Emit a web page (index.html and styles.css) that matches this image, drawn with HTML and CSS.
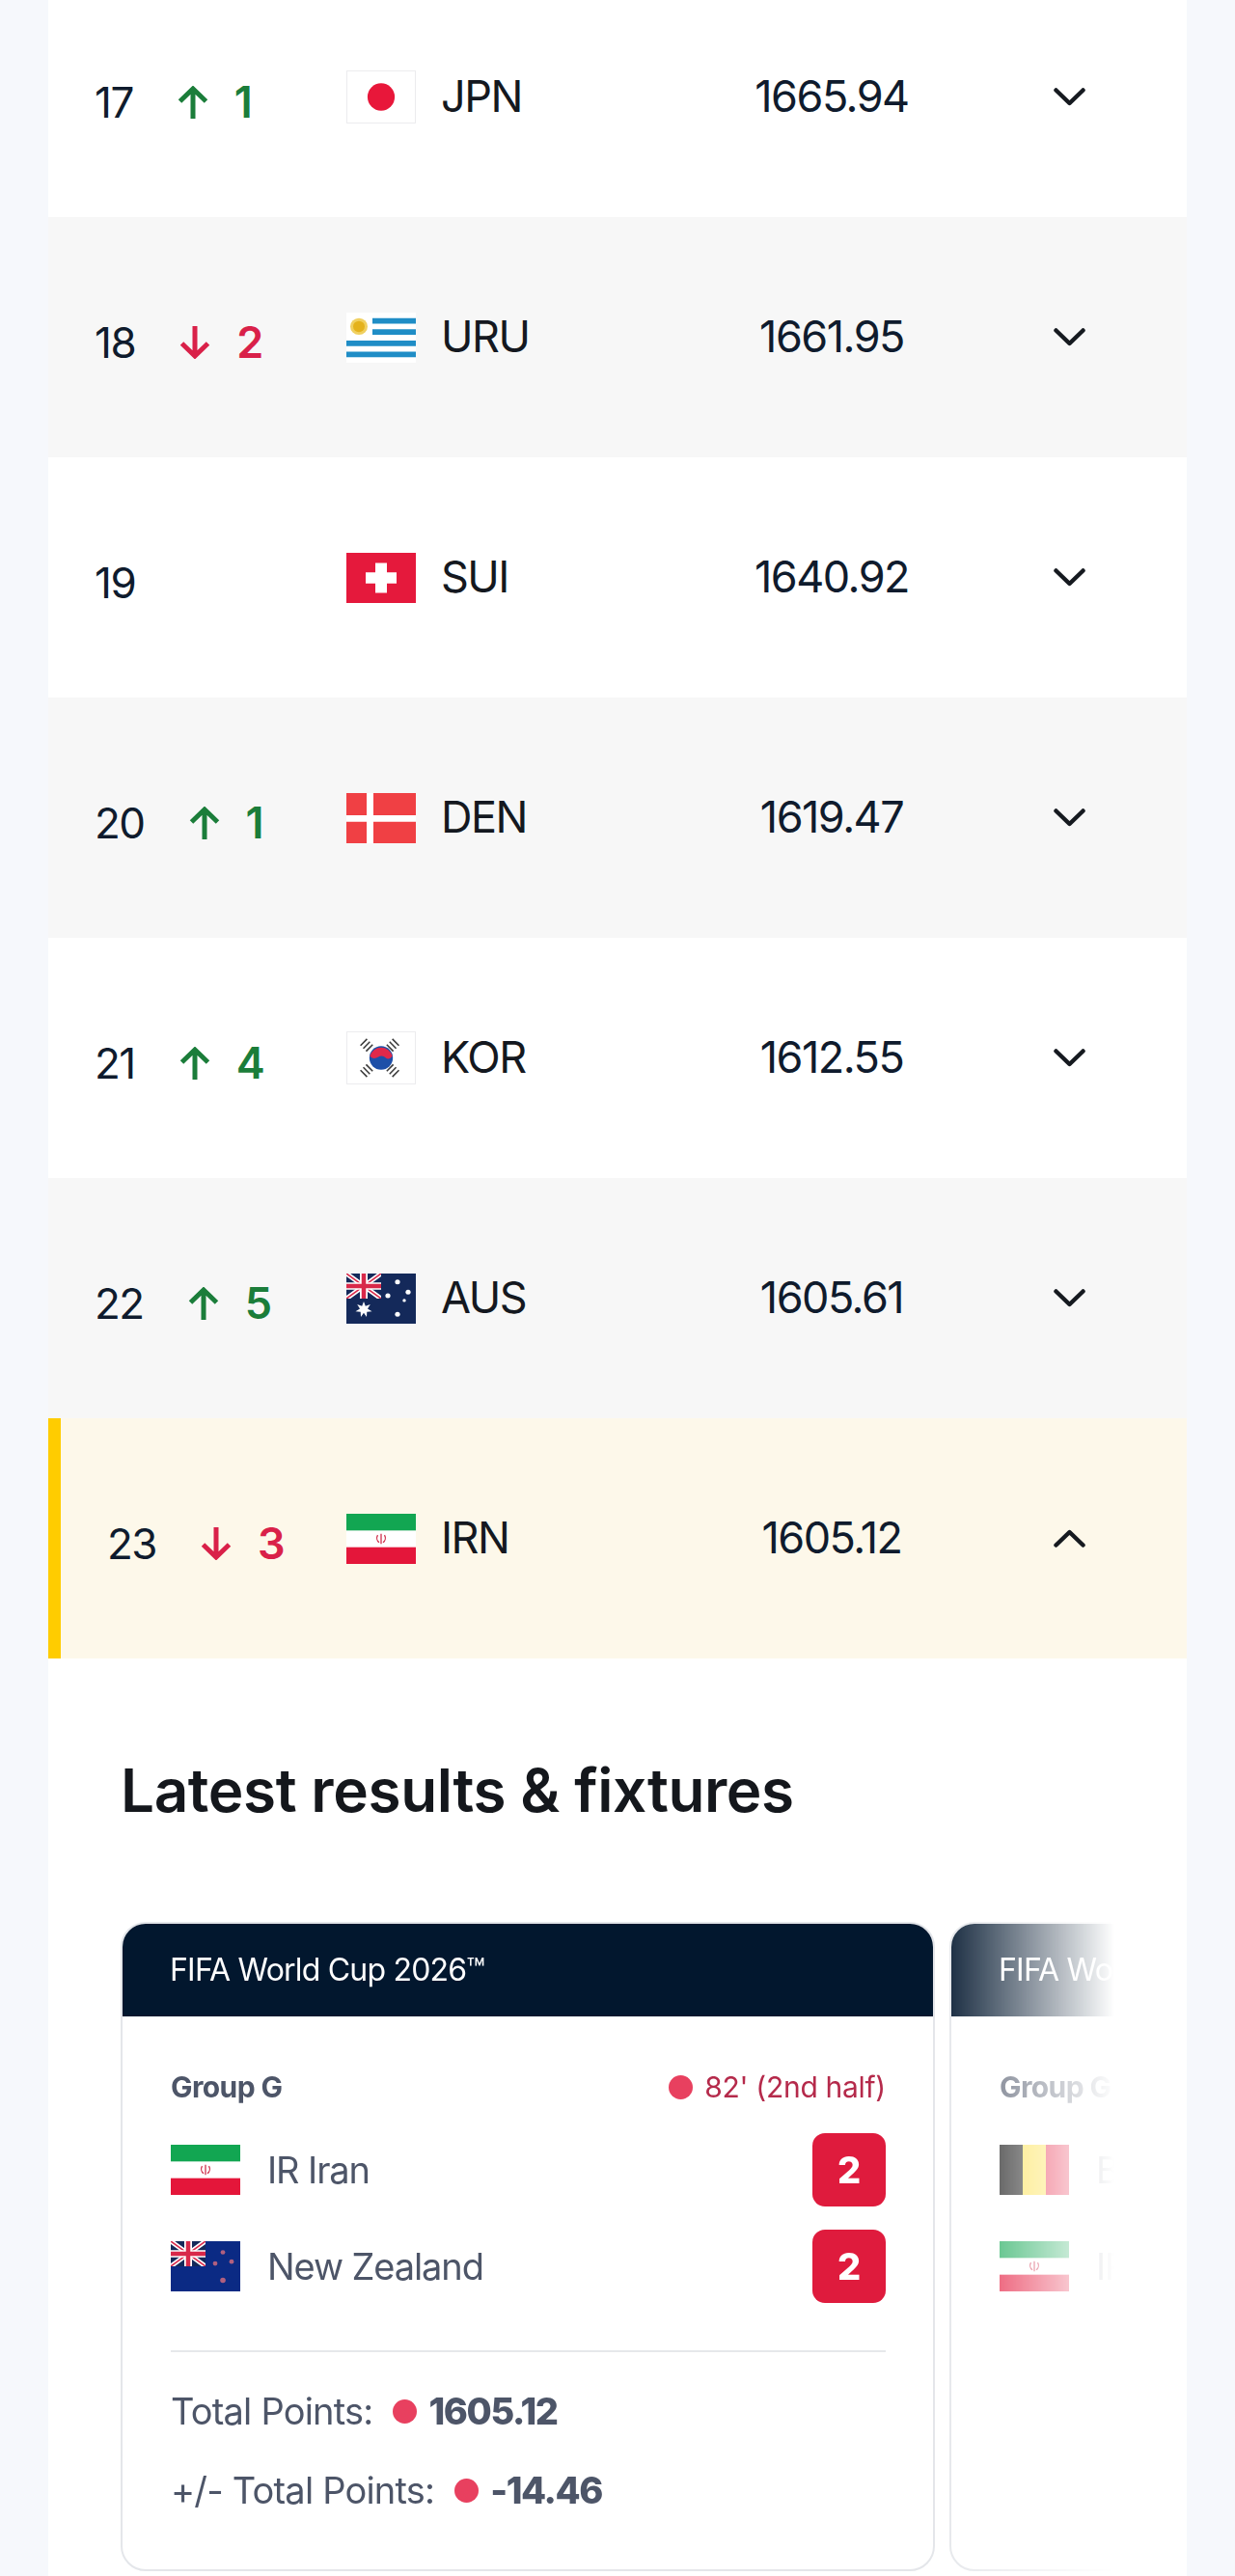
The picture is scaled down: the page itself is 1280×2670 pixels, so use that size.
FILE: index.html
```html
<!DOCTYPE html>
<html lang="en">
<head>
<meta charset="utf-8">
<title>FIFA Ranking</title>
<link rel="stylesheet" href="styles.css">
</head>
<body>
<svg class="defs" width="0" height="0" aria-hidden="true">
  <defs>
    <symbol id="up" viewBox="0 0 32 34"><path d="M16 34V3M2.500 16 16 3l13.500 13" fill="none" stroke="currentColor" stroke-width="5"/></symbol>
    <symbol id="down" viewBox="0 0 32 34"><path d="M16 0v31M2.500 18 16 31l13.500-13" fill="none" stroke="currentColor" stroke-width="5"/></symbol>
    <symbol id="chev-d" viewBox="0 0 33 19"><path d="M2.500 2.500 16.500 16 30.500 2.500" fill="none" stroke="#161a20" stroke-width="4.500" stroke-linecap="round" stroke-linejoin="round"/></symbol>
    <symbol id="chev-u" viewBox="0 0 33 19"><path d="M2.500 16.500 16.500 3 30.500 16.500" fill="none" stroke="#161a20" stroke-width="4.500" stroke-linecap="round" stroke-linejoin="round"/></symbol>
    <symbol id="irn" viewBox="0 0 72 54" preserveAspectRatio="none">
      <rect width="72" height="54" fill="#fff"/><rect width="72" height="18" fill="#12a652"/><rect y="36" width="72" height="18" fill="#e4163a"/>
      <path d="M36 21.500v11M32.500 23c-1.500 2.500-1 6 1.500 8M39.500 23c1.500 2.500 1 6-1.500 8" fill="none" stroke="#d0304c" stroke-width="1.300"/>
    </symbol>
    <symbol id="jack" viewBox="0 0 36 27">
      <rect width="36" height="27" fill="#14295a"/>
      <path d="M0 0 36 27M36 0 0 27" stroke="#fff" stroke-width="5"/>
      <path d="M0 0 36 27M36 0 0 27" stroke="#d8294a" stroke-width="1.600"/>
      <path d="M18 0v27M0 13.500h36" stroke="#fff" stroke-width="8"/>
      <path d="M18 0v27M0 13.500h36" stroke="#d8294a" stroke-width="4.500"/>
    </symbol>
  </defs>
</svg>
<main class="table">
  <div class="row">
    <div class="rank-cell"><span class="rank">17</span><span class="move up"><svg class="arrow"><use href="#up"/></svg><b>1</b></span></div>
    <div class="team"><svg class="flag flag-light" viewBox="0 0 72 54" preserveAspectRatio="none"><rect width="72" height="54" fill="#fff"/><circle cx="36" cy="27" r="14.500" fill="#e8173a"/></svg><span>JPN</span></div>
    <div class="points">1665.94</div>
    <div class="toggle"><svg class="chev"><use href="#chev-d"/></svg></div>
  </div>
  <div class="row alt">
    <div class="rank-cell"><span class="rank">18</span><span class="move down"><svg class="arrow"><use href="#down"/></svg><b>2</b></span></div>
    <div class="team"><svg class="flag" viewBox="0 0 72 54" preserveAspectRatio="none"><rect width="72" height="54" fill="#fff"/><path d="M27 9h45M27 21h45M0 33h72M0 45h72" stroke="#1f8dc6" stroke-width="6"/><circle cx="13" cy="15" r="9" fill="#f0d060"/><circle cx="13" cy="15" r="6" fill="#e4b21c"/></svg><span>URU</span></div>
    <div class="points">1661.95</div>
    <div class="toggle"><svg class="chev"><use href="#chev-d"/></svg></div>
  </div>
  <div class="row">
    <div class="rank-cell"><span class="rank">19</span></div>
    <div class="team"><svg class="flag" viewBox="0 0 72 54" preserveAspectRatio="none"><rect width="72" height="54" fill="#e5193c"/><path d="M30 11h12v10h10v12H42v10H30V33H20V21h10z" fill="#fff"/></svg><span>SUI</span></div>
    <div class="points">1640.92</div>
    <div class="toggle"><svg class="chev"><use href="#chev-d"/></svg></div>
  </div>
  <div class="row alt">
    <div class="rank-cell"><span class="rank">20</span><span class="move up"><svg class="arrow"><use href="#up"/></svg><b>1</b></span></div>
    <div class="team"><svg class="flag" viewBox="0 0 72 54" preserveAspectRatio="none"><rect width="72" height="54" fill="#f04044"/><path d="M24.500 0v54M0 27.500h72" stroke="#fff" stroke-width="7"/></svg><span>DEN</span></div>
    <div class="points">1619.47</div>
    <div class="toggle"><svg class="chev"><use href="#chev-d"/></svg></div>
  </div>
  <div class="row">
    <div class="rank-cell"><span class="rank">21</span><span class="move up"><svg class="arrow"><use href="#up"/></svg><b>4</b></span></div>
    <div class="team"><svg class="flag flag-light" viewBox="0 0 72 54" preserveAspectRatio="none"><rect width="72" height="54" fill="#fff"/><circle cx="36" cy="27" r="12.500" fill="#1d4fa8"/><path d="M24 25a12.500 12.500 0 0 1 24 0c-2 3-5 4-7 2s-5-3-8-1-7 2-9-1z" fill="#e0294a"/><g stroke="#3a3a3a" stroke-width="1.600" fill="none"><path d="M14 14l7-7M17 17l7-7M20 20l7-7"/><path d="M45 10l7 7M48 7l7 7M42 13l7 7"/><path d="M14 40l7 7M17 37l7 7M20 34l7 7"/><path d="M45 44l7-7M48 47l7-7M42 41l7-7"/></g></svg><span>KOR</span></div>
    <div class="points">1612.55</div>
    <div class="toggle"><svg class="chev"><use href="#chev-d"/></svg></div>
  </div>
  <div class="row alt">
    <div class="rank-cell"><span class="rank">22</span><span class="move up"><svg class="arrow"><use href="#up"/></svg><b>5</b></span></div>
    <div class="team"><svg class="flag" viewBox="0 0 72 54" preserveAspectRatio="none"><rect width="72" height="54" fill="#14295a"/><use href="#jack" width="36" height="27"/><g fill="#fff"><circle cx="53" cy="9" r="2.600"/><circle cx="64" cy="20" r="2.600"/><circle cx="43" cy="24" r="2.600"/><circle cx="60" cy="29" r="1.700"/><circle cx="53" cy="44" r="2.600"/><path d="M18 30l1.800 5 5-1.800-2.800 4.800 4.500 2.800-5.200.6-.3 5.300-3-4.400-3 4.400-.3-5.300-5.200-.6 4.500-2.800-2.800-4.800 5 1.800z"/></g></svg><span>AUS</span></div>
    <div class="points">1605.61</div>
    <div class="toggle"><svg class="chev"><use href="#chev-d"/></svg></div>
  </div>
  <div class="row current">
    <div class="rank-cell"><span class="rank">23</span><span class="move down"><svg class="arrow"><use href="#down"/></svg><b>3</b></span></div>
    <div class="team"><svg class="flag"><use href="#irn"/></svg><span>IRN</span></div>
    <div class="points">1605.12</div>
    <div class="toggle"><svg class="chev"><use href="#chev-u"/></svg></div>
  </div>
  <section class="panel">
    <h2 class="panel-title">Latest results &amp; fixtures</h2>
    <div class="cards">
      <article class="card">
        <header class="card-head">FIFA World Cup 2026™</header>
        <div class="card-body">
          <div class="meta"><span class="group">Group G</span><span class="live"><i class="dot"></i>82' (2nd half)</span></div>
          <div class="match-row"><svg class="flag"><use href="#irn"/></svg><span class="name">IR Iran</span><span class="score">2</span></div>
          <div class="match-row"><svg class="flag" viewBox="0 0 72 54" preserveAspectRatio="none"><rect width="72" height="54" fill="#0b2a84"/><use href="#jack" width="36" height="27"/><g fill="#b0607f"><circle cx="54" cy="12" r="2.400"/><circle cx="63" cy="22" r="2.400"/><circle cx="46" cy="24" r="2.400"/><circle cx="54" cy="42" r="2.800"/></g></svg><span class="name">New Zealand</span><span class="score">2</span></div>
          <div class="stats">
            <div class="stat"><span>Total Points:</span><i class="dot"></i><b>1605.12</b></div>
            <div class="stat"><span>+/- Total Points:</span><i class="dot"></i><b>-14.46</b></div>
          </div>
        </div>
      </article>
      <article class="card">
        <header class="card-head">FIFA World Cup 2026™</header>
        <div class="card-body">
          <div class="meta"><span class="group">Group G</span></div>
          <div class="match-row"><svg class="flag" viewBox="0 0 72 54" preserveAspectRatio="none"><rect width="24" height="54" fill="#111"/><rect x="24" width="24" height="54" fill="#fde047"/><rect x="48" width="24" height="54" fill="#e5193c"/></svg><span class="name">Belgium</span></div>
          <div class="match-row"><svg class="flag"><use href="#irn"/></svg><span class="name">IR Iran</span></div>
        </div>
      </article>
    </div>
  </section>
</main>
</body>
</html>
```

FILE: styles.css
```css
* { box-sizing: border-box; }
html, body { margin: 0; padding: 0; }
body {
  height: 2670px;
  overflow: hidden;
  background: #f6f8fc;
  font-family: Inter, "Liberation Sans", sans-serif;
  color: #141820;
}
.defs { display: block; height: 0; }
.table { width: 1180px; margin: -24px 0 0 50px; }

.row {
  display: grid;
  grid-template-columns: 309px 300px 406px 1fr;
  height: 249px;
  background: #fff;
  font-size: 45px;
}
.row > * { display: flex; align-items: center; }
.alt { background: #f7f7f7; }
.current { background: #fdf8ea; }
.current .rank-cell { border-left: 13px solid #ffcc00; }

.rank-cell { padding: 10px 0 0 48px; gap: 46px; color: #0f1b2d; font-size: 44px; letter-spacing: -1.500px; }
.move { display: flex; align-items: center; gap: 27px; font-size: 45px; font-weight: 600; letter-spacing: 0; }
.move b { font-weight: 600; }
.up { color: #1b7d3a; }
.down { color: #d92149; }
.arrow { width: 32px; height: 34px; display: block; }

.team { gap: 26px; letter-spacing: -1.500px; }
.team span { padding-bottom: 2px; }
.flag { display: block; width: 72px; height: 52px; flex: none; }
.flag-light { height: 55px; border: 1px solid #ececee; }
.points { justify-content: center; color: #0f1b2d; letter-spacing: -1.500px; padding-bottom: 2px; }
.toggle { justify-content: flex-start; padding-left: 27px; }
.chev { width: 33px; height: 19px; display: block; }

.panel { background: #fff; padding: 99px 0 0 75px; height: 960px; }
.panel-title {
  margin: 0 0 98px;
  font-size: 62px;
  line-height: 76px;
  font-weight: 600;
  letter-spacing: -.4px;
  color: #14171c;
}
.cards {
  display: flex;
  gap: 15px;
  width: 1030px;
  overflow: hidden;
  -webkit-mask-image: linear-gradient(to right, #000 calc(100% - 190px), transparent 100%);
  mask-image: linear-gradient(to right, #000 calc(100% - 190px), transparent 100%);
}
.card {
  flex: none;
  width: 844px;
  height: 673px;
  border: 2px solid #e4e6ea;
  border-radius: 26px;
  overflow: hidden;
  background: #fff;
}
.card-head {
  height: 98px;
  margin: -2px -2px 0;
  padding-left: 51px;
  display: flex;
  align-items: center;
  background: #02172e;
  color: #fff;
  font-size: 32px;
  letter-spacing: -.8px;
}
.card-body { padding: 0 49px 0 50px; color: #4d5568; }
.meta {
  height: 40px;
  margin: 53px 0 28px;
  display: flex;
  align-items: center;
  justify-content: space-between;
}
.group { font-size: 30px; font-weight: 700; letter-spacing: -.6px; }
.live {
  display: flex;
  align-items: center;
  gap: 12px;
  font-size: 30px;
  color: #b52a4b;
  letter-spacing: -.3px;
}
.dot { display: block; width: 25px; height: 25px; border-radius: 50%; background: #e8405f; flex: none; }
.match-row { display: flex; align-items: center; gap: 28px; height: 76px; margin-bottom: 24px; }
.name { flex: 1; font-size: 38px; letter-spacing: -1.100px; }
.score {
  width: 76px;
  height: 76px;
  border-radius: 13px;
  background: #df1b3d;
  color: #fff;
  font-size: 38px;
  font-weight: 800;
  display: flex;
  align-items: center;
  justify-content: center;
}
.stats { border-top: 2px solid #e6e8eb; margin-top: 49px; padding-top: 36px; display: flex; flex-direction: column; gap: 32px; }
.stat { height: 50px; display: flex; align-items: center; gap: 12px; font-size: 38px; letter-spacing: -.8px; }
.stat span { margin-right: 9px; }
.stat b { font-weight: 800; letter-spacing: -1.400px; }
```
